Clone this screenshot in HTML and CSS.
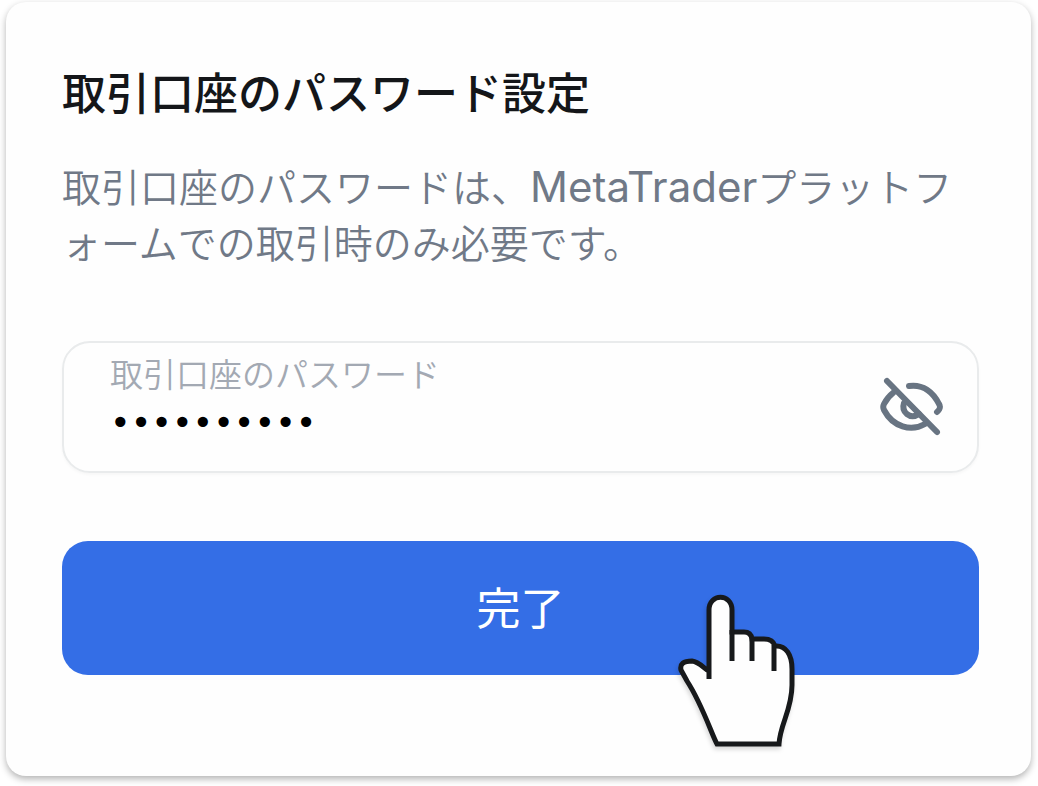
FILE: index.html
```html
<!DOCTYPE html>
<html lang="ja">
  <head>
    <meta charset="UTF-8" />
    <meta name="viewport" content="width=device-width, initial-scale=1.0" />
    <title>取引口座のパスワード設定</title>
    <link rel="stylesheet" href="styles.css">
  </head>
  <body>
    <form class="card">
      <h1 class="title">取引口座のパスワード設定</h1>
      <p class="description">取引口座のパスワードは、<span class="latin">MetaTrader</span>プラットフォームでの取引時のみ必要です。</p>

      <div class="field">
        <div class="field-text">
          <label class="label" for="password">取引口座のパスワード</label>
          <input class="password" id="password" type="password" value="password12" />
        </div>
        <button class="toggle" type="button" aria-label="パスワードを表示">
          <svg class="eye" viewBox="0 0 64 64" aria-hidden="true">
            <path d="M29 11C43 9 53 17 59 29C61 32 60 34 57 37" />
            <path d="M14 17C9 21 6 25 4 29C3 31 3 33 4 35C13 52 31 57 45 49" />
            <path d="M24 28C21 37 30 45 39 39" />
            <path d="M7 6L57 57" />
          </svg>
        </button>
      </div>

      <div class="actions">
        <button class="submit" type="button">完了</button>
        <svg class="pointer" viewBox="0 0 120 156" aria-hidden="true">
          <path d="M31 85V16C31 -1 54 -1 54 16V38H66Q73 38 74 45H86Q95 45 97 52C108 51 114 61 114 75V91C114 116 102 130 101 150H39C34 141 24 110 9 87L3 76Q1 67 14 67C22 68 26 75 31 77" />
          <path d="M54 36V67M74 44V67M96 51V77" />
        </svg>
      </div>
    </form>
  </body>
</html>
```

FILE: styles.css
```css
* {
  box-sizing: border-box;
}
body {
  margin: 0;
  padding: 2px 7px 10px 6px;
  background-color: #fff;
  font-family: "Noto Sans CJK JP", sans-serif;
}
.card {
  padding: 56px 52px 101px 56px;
  background-color: #fefefe;
  border-radius: 20px;
  box-shadow: 0 3px 7px rgba(0, 0, 0, 0.3);
}
.title {
  margin: 0 0 33px;
  font-size: 44px;
  font-weight: 500;
  line-height: 66px;
  color: #141619;
}
.description {
  margin: 0 0 72px;
  font-size: 39px;
  font-weight: 350;
  line-height: 56px;
  color: #707987;
}
.latin {
  font-family: Inter, sans-serif;
  font-size: 42px;
  font-weight: 400;
  line-height: 1;
}
.field {
  display: flex;
  align-items: center;
  justify-content: space-between;
  padding: 6px 33px 22px 46px;
  border: 2px solid #e9ebec;
  border-radius: 28px;
  box-shadow: 0 2px 3px rgba(0, 0, 0, 0.03);
}
.field-text {
  display: flex;
  flex: 1;
  flex-direction: column;
}
.label {
  font-size: 33px;
  font-weight: 350;
  line-height: 48px;
  color: #a3a9b3;
}
.password {
  width: 100%;
  height: 52px;
  padding: 0;
  border: none;
  outline: none;
  background: none;
  font-family: "DejaVu Sans", sans-serif;
  font-size: 35px;
  color: #000;
}
.toggle {
  align-self: flex-end;
  padding: 0;
  border: none;
  background: none;
  cursor: pointer;
}
.eye {
  display: block;
  width: 64px;
  height: 64px;
  margin-bottom: 10px;
  fill: none;
  stroke: #687482;
  stroke-width: 6;
  stroke-linecap: round;
}
.actions {
  position: relative;
  margin-top: 68px;
}
.submit {
  display: block;
  width: 100%;
  padding: 32px 0 36px;
  border: none;
  border-radius: 26px;
  background-color: #346ee6;
  font-family: inherit;
  font-size: 44px;
  font-weight: 400;
  line-height: 66px;
  color: #fff;
  cursor: pointer;
}
/* Hand cursor resting on the submit button */
.pointer {
  position: absolute;
  top: 53px;
  right: 181px;
  width: 120px;
  height: 156px;
  fill: #fefefe;
  stroke: #17191b;
  stroke-width: 5;
  filter: drop-shadow(-1px 3px 2px rgba(0, 0, 0, 0.15));
  pointer-events: none;
}
```
